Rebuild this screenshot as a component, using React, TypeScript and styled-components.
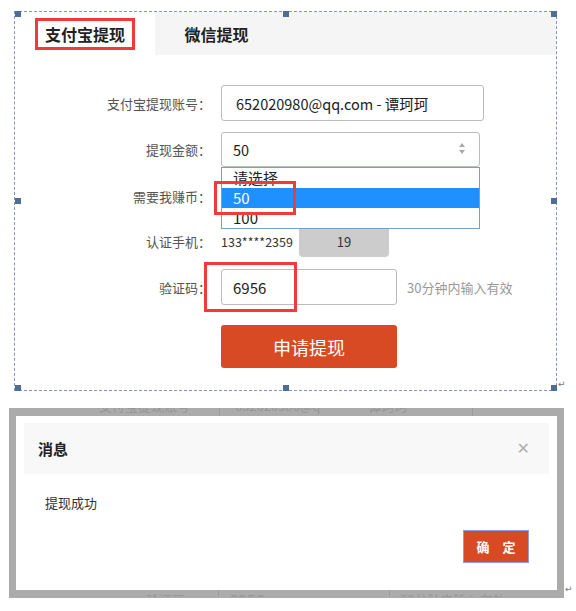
import React from "react";
import styled, { createGlobalStyle } from "styled-components";

const Global = createGlobalStyle`
  html, body { margin: 0; padding: 0; background: #fff; }
  body { font-family: "Noto Sans CJK SC", "Noto Sans", sans-serif; color: #333; }
  * { box-sizing: border-box; }
`;

const Page = styled.div`
  width: 576px;
  height: 611px;
  padding-top: 11px;
  overflow: hidden;
`;

const Line = styled.div<{ $top?: number; $left: number }>`
  display: flex;
  align-items: flex-end;
  margin-top: ${(p) => p.$top ?? 0}px;
  padding-left: ${(p) => p.$left}px;
`;

const ParaMark = styled.span<{ $drop?: number }>`
  font-family: "DejaVu Sans", sans-serif;
  font-size: 9px;
  line-height: 9px;
  color: #777;
  margin-left: 1px;
  margin-bottom: ${(p) => p.$drop ?? 0}px;
`;

const Frame = styled.div`
  position: relative;
  width: 543px;
  height: 380px;
  border: 1px dashed #7f98bd;
  display: flex;
  flex-direction: column;
`;

const Handle = styled.span<{ $v: "top" | "mid" | "bottom"; $h: "left" | "mid" | "right" }>`
  position: absolute;
  width: 6px;
  height: 6px;
  background: #4e6d97;
  ${(p) => (p.$v === "top" ? "top: -1px;" : p.$v === "bottom" ? "bottom: -1px;" : "top: calc(50% - 3px);")}
  ${(p) => (p.$h === "left" ? "left: 0;" : p.$h === "right" ? "right: -1px;" : "left: calc(50% - 3px);")}
`;

const TabBar = styled.div`
  display: flex;
  height: 43px;
  background: #f5f5f5;
`;

const Tab = styled.div<{ $active?: boolean; $w: number }>`
  width: ${(p) => p.$w}px;
  display: flex;
  align-items: center;
  justify-content: center;
  background: ${(p) => (p.$active ? "#fff" : "transparent")};
  font-size: 16px;
  font-weight: 700;
  color: #222;
`;

const Marked = styled.span`
  display: inline-block;
  border: 3px solid #f2393b;
  padding: 0 7px;
  height: 32px;
  line-height: 26px;
`;

const Form = styled.div`
  display: flex;
  flex-direction: column;
  gap: 11px;
  padding-top: 30px;
`;

const Row = styled.div<{ $h: number; $pad?: number }>`
  display: grid;
  grid-template-columns: 196px 1fr;
  column-gap: 10px;
  height: ${(p) => p.$h}px;
  margin-top: ${(p) => p.$pad ?? 0}px;
  align-items: center;
`;

const Label = styled.div`
  text-align: right;
  font-size: 13px;
  color: #555;
  white-space: nowrap;
`;

const Field = styled.div`
  position: relative;
  display: flex;
  align-items: center;
  height: 100%;
`;

const Box = styled.div<{ $w: number; $h: number; $pl?: number; $fs?: number }>`
  position: relative;
  width: ${(p) => p.$w}px;
  height: ${(p) => p.$h}px;
  border: 1px solid #bcbcbc;
  border-radius: 3px;
  padding-left: ${(p) => p.$pl ?? 11}px;
  display: flex;
  align-items: center;
  font-size: ${(p) => p.$fs ?? 14.5}px;
  color: #222;
  background: #fff;
`;

const Arrows = styled.svg`
  position: absolute;
  right: 13px;
  top: 10px;
`;

const Dropdown = styled.div`
  position: absolute;
  top: 35px;
  left: 0;
  width: 259px;
  border: 1px solid #7a9ccf;
  background: #fff;
  z-index: 2;
`;

const Option = styled.div<{ $sel?: boolean }>`
  height: 20px;
  line-height: 20px;
  padding-left: 11px;
  font-size: 15px;
  color: ${(p) => (p.$sel ? "#fff" : "#222")};
  background: ${(p) => (p.$sel ? "#1e90ff" : "transparent")};
`;

const RedBox = styled.span<{ $l: number; $t: number; $w: number; $h: number }>`
  position: absolute;
  left: ${(p) => p.$l}px;
  top: ${(p) => p.$t}px;
  width: ${(p) => p.$w}px;
  height: ${(p) => p.$h}px;
  border: 3px solid #f2393b;
  z-index: 3;
  pointer-events: none;
`;

const Phone = styled.span`
  font-size: 12.5px;
  color: #333;
`;

const CodeButton = styled.div`
  width: 90px;
  height: 32px;
  margin-left: 6px;
  border-radius: 4px;
  background: #cccccc;
  display: flex;
  align-items: center;
  justify-content: center;
  font-size: 13px;
  color: #333;
`;

const Hint = styled.span`
  margin-left: 10px;
  font-size: 13px;
  color: #999;
`;

const Submit = styled.button`
  width: 176px;
  height: 43px;
  border: none;
  border-radius: 3px;
  background: #d84a23;
  color: #fff;
  font-family: inherit;
  font-size: 18px;
  padding: 0;
`;

const Backdrop = styled.div`
  width: 555px;
  height: 190px;
  background: #ababab;
  padding: 0 7px;
  display: flex;
  flex-direction: column;
`;

const Strip = styled.div<{ $h: number; $align: "end" | "start" }>`
  height: ${(p) => p.$h}px;
  overflow: hidden;
  display: flex;
  align-items: ${(p) => (p.$align === "end" ? "flex-end" : "flex-start")};
`;

const GhostRow = styled.div<{ $cols: string }>`
  display: grid;
  grid-template-columns: ${(p) => p.$cols};
  width: 100%;
  height: 20px;
  color: #979797;
  font-size: 13px;
  line-height: 20px;
`;

const GhostCell = styled.div<{ $align?: string; $pl?: number; $pr?: number; $line?: boolean; $fs?: number }>`
  padding-left: ${(p) => p.$pl ?? 0}px;
  padding-right: ${(p) => p.$pr ?? 0}px;
  border-left: ${(p) => (p.$line ? "1px solid #9c9c9c" : "none")};
  white-space: nowrap;
  display: flex;
  justify-content: ${(p) => (p.$align === "right" ? "flex-end" : "flex-start")};
  font-size: ${(p) => p.$fs ?? 13}px;
`;

const GhostName = styled.span`
  margin-left: 48px;
`;

const Dialog = styled.div`
  height: 174px;
  background: #fff;
  padding: 7px 8px 0;
  display: flex;
  flex-direction: column;
`;

const DialogHead = styled.div`
  height: 51px;
  background: #f8f8f8;
  display: flex;
  align-items: center;
  justify-content: space-between;
  padding: 0 19px 0 14px;
`;

const DialogTitle = styled.span`
  font-size: 15px;
  font-weight: 700;
  color: #222;
`;

const Close = styled.span`
  font-family: "DejaVu Sans", sans-serif;
  font-size: 16px;
  color: #b0b0b0;
`;

const DialogBody = styled.div`
  padding: 20px 0 0 21px;
  font-size: 13px;
  line-height: 18px;
  color: #333;
`;

const DialogFoot = styled.div`
  display: flex;
  justify-content: flex-end;
  padding: 18px 20px 0 0;
`;

const Confirm = styled.button`
  width: 66px;
  height: 33px;
  border: 1px solid #8e9de0;
  background: #d84a23;
  color: #fff;
  font-family: inherit;
  font-size: 13px;
  font-weight: 700;
  word-spacing: 10px;
  padding: 0;
`;

export default function App() {
  return (
    <Page>
      <Global />
      <Line $left={14}>
        <Frame>
          <Handle $v="top" $h="left" />
          <Handle $v="top" $h="mid" />
          <Handle $v="top" $h="right" />
          <Handle $v="mid" $h="left" />
          <Handle $v="mid" $h="right" />
          <Handle $v="bottom" $h="left" />
          <Handle $v="bottom" $h="mid" />
          <Handle $v="bottom" $h="right" />
          <TabBar>
            <Tab $active $w={140}>
              <Marked>支付宝提现</Marked>
            </Tab>
            <Tab $w={123}>微信提现</Tab>
          </TabBar>
          <Form>
            <Row $h={36}>
              <Label>支付宝提现账号：</Label>
              <Field>
                <Box $w={263} $h={36} $pl={14}>
                  652020980@qq.com - 谭珂珂
                </Box>
              </Field>
            </Row>
            <Row $h={35}>
              <Label>提现金额：</Label>
              <Field>
                <Box $w={259} $h={35}>
                  50
                  <Arrows width="8" height="12" viewBox="0 0 8 12">
                    <path d="M4 0 L7 4 L1 4 Z" fill="#a9a9a9" />
                    <path d="M1 7 L7 7 L4 11 Z" fill="#a9a9a9" />
                  </Arrows>
                </Box>
                <Dropdown>
                  <Option>请选择</Option>
                  <Option $sel>50</Option>
                  <Option>100</Option>
                  <RedBox $l={-8} $t={13} $w={82} $h={34} />
                </Dropdown>
              </Field>
            </Row>
            <Row $h={36}>
              <Label>需要我赚币：</Label>
              <Field />
            </Row>
            <Row $h={31}>
              <Label>认证手机：</Label>
              <Field>
                <Phone>133****2359</Phone>
                <CodeButton>19</CodeButton>
              </Field>
            </Row>
            <Row $h={40}>
              <Label>验证码：</Label>
              <Field>
                <Box $w={176} $h={36} $fs={15}>
                  6956
                  <RedBox $l={-18} $t={-8} $w={93} $h={50} />
                </Box>
                <Hint>30分钟内输入有效</Hint>
              </Field>
            </Row>
            <Row $h={43} $pad={7}>
              <span />
              <Field>
                <Submit>申请提现</Submit>
              </Field>
            </Row>
          </Form>
        </Frame>
        <ParaMark $drop={2}>↵</ParaMark>
      </Line>
      <Line $left={9} $top={17}>
        <Backdrop>
          <Strip $h={8} $align="end">
            <GhostRow $cols="203px 253px 1fr">
              <GhostCell $align="right" $pr={29}>支付宝提现账号</GhostCell>
              <GhostCell $line $pl={15}>
                <span>652020980@q</span>
                <GhostName>谭珂珂</GhostName>
              </GhostCell>
              <GhostCell $line />
            </GhostRow>
          </Strip>
          <Dialog>
            <DialogHead>
              <DialogTitle>消息</DialogTitle>
              <Close>✕</Close>
            </DialogHead>
            <DialogBody>提现成功</DialogBody>
            <DialogFoot>
              <Confirm>确 定</Confirm>
            </DialogFoot>
          </Dialog>
          <Strip $h={7} $align="start">
            <GhostRow $cols="202px 171px 1fr">
              <GhostCell $align="right" $pr={20}>验证码：</GhostCell>
              <GhostCell $line $pl={10} $fs={16}>6956</GhostCell>
              <GhostCell $line $pl={10}>30分钟内输入有效</GhostCell>
            </GhostRow>
          </Strip>
        </Backdrop>
        <ParaMark $drop={4}>↵</ParaMark>
      </Line>
    </Page>
  );
}
